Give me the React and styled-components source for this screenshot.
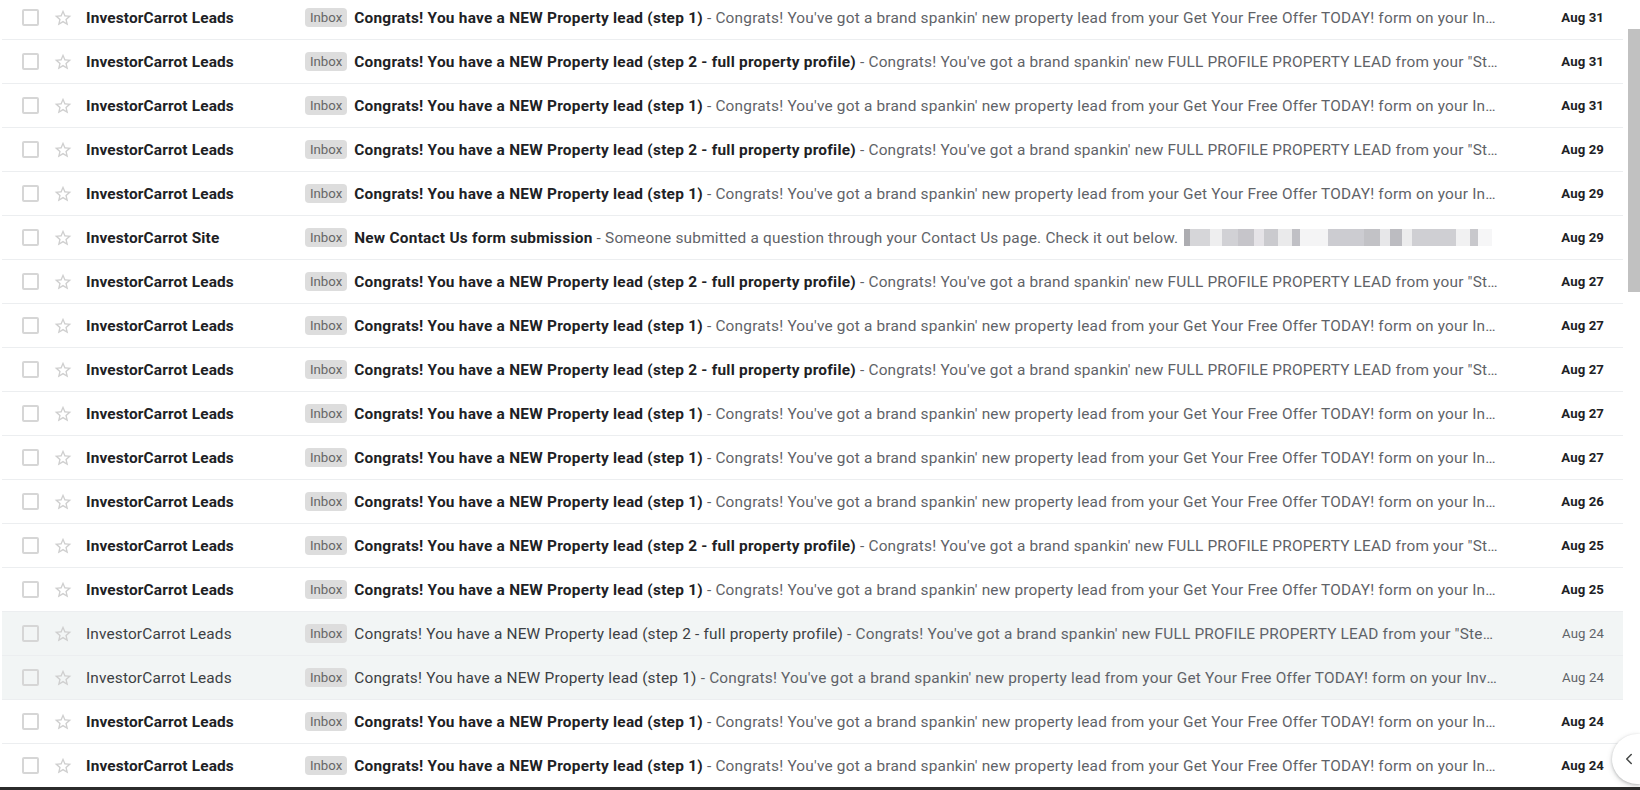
import React from "react";
import styled, { createGlobalStyle } from "styled-components";
import { ChevronLeft } from "lucide-react";

const GlobalStyle = createGlobalStyle`
  html, body {
    margin: 0;
    padding: 0;
    background: #fff;
    overflow: hidden;
  }
  body {
    font-family: Roboto, "Liberation Sans", Arial, sans-serif;
    -webkit-font-smoothing: antialiased;
  }
`;

const STEP1 = "Congrats! You have a NEW Property lead (step 1)";
const STEP2 = "Congrats! You have a NEW Property lead (step 2 - full property profile)";
const SNIP1 =
  "Congrats! You've got a brand spankin' new property lead from your Get Your Free Offer TODAY! form on your InvestorCarrot website. Here are the details";
const SNIP2 =
  "Congrats! You've got a brand spankin' new FULL PROFILE PROPERTY LEAD from your \"Step 2\" form on your InvestorCarrot website. Here are the details";

const lead = (step, date, read) => ({
  from: "InvestorCarrot Leads",
  subject: step === 1 ? STEP1 : STEP2,
  snippet: step === 1 ? SNIP1 : SNIP2,
  date,
  read,
});

const emails = [
  lead(1, "Aug 31"),
  lead(2, "Aug 31"),
  lead(1, "Aug 31"),
  lead(2, "Aug 29"),
  lead(1, "Aug 29"),
  {
    from: "InvestorCarrot Site",
    subject: "New Contact Us form submission",
    snippet: "Someone submitted a question through your Contact Us page. Check it out below.",
    date: "Aug 29",
    blurred: true,
  },
  lead(2, "Aug 27"),
  lead(1, "Aug 27"),
  lead(2, "Aug 27"),
  lead(1, "Aug 27"),
  lead(1, "Aug 27"),
  lead(1, "Aug 26"),
  lead(2, "Aug 25"),
  lead(1, "Aug 25"),
  lead(2, "Aug 24", true),
  lead(1, "Aug 24", true),
  lead(1, "Aug 24"),
  lead(1, "Aug 24"),
];

// widths / shades of the pixelated bit after "Check it out below."
const mosaic = [
  [6, "#a9a9ad"], [20, "#d4d4d8"], [12, "#eeeeef"], [16, "#cfcfd3"], [16, "#c3c2c8"],
  [10, "#e4e2e6"], [14, "#c8c8cc"], [14, "#e9e9ea"], [8, "#bdbdc2"], [28, "#f4f4f5"],
  [36, "#cacacf"], [16, "#bfbfc4"], [10, "#e6e6e8"], [12, "#b9b9be"], [10, "#ececed"],
  [44, "#cdcdd1"], [14, "#f1f1f2"], [8, "#c6c6ca"], [14, "#f6f6f7"],
];

const Page = styled.div`
  width: 1640px;
  height: 790px;
  position: relative;
  display: flex;
  flex-direction: column;
  overflow: hidden;
`;

const Main = styled.div`
  flex: 1;
  display: flex;
  min-height: 0;
  overflow: hidden;
`;

const List = styled.div`
  width: 1621px;
  margin: -4px 0 0 2px;
  flex-shrink: 0;
`;

const Row = styled.div`
  height: 43px;
  display: flex;
  align-items: center;
  padding: 0 19px 0 20px;
  border-bottom: 1px solid #eceef0;
  background: ${(p) => (p.$read ? "#f2f5f5" : "#fff")};
  color: #202124;
  font-size: 15.4px;
  letter-spacing: 0.25px;
`;

const Check = styled.span`
  width: 13px;
  height: 13px;
  border: 2px solid #d6d6d6;
  border-radius: 2px;
  flex-shrink: 0;
`;

const StarBox = styled.span`
  width: 20px;
  height: 20px;
  margin-left: 14px;
  display: flex;
  flex-shrink: 0;
`;

const Sender = styled.span`
  width: 219px;
  margin-left: 13px;
  flex-shrink: 0;
  font-weight: ${(p) => (p.$read ? 400 : 700)};
  color: ${(p) => (p.$read ? "#3c4043" : "#202124")};
  letter-spacing: 0.15px;
  white-space: nowrap;
  overflow: hidden;
`;

const Line = styled.div`
  flex: 1;
  min-width: 0;
  white-space: nowrap;
  overflow: hidden;
  text-overflow: ellipsis;
  color: #5f6368;
  letter-spacing: 0.2px;
`;

const Label = styled.span`
  display: inline-block;
  height: 19px;
  line-height: 19px;
  padding: 0 5px;
  margin-right: 7px;
  border-radius: 4px;
  background: #dddddd;
  color: #666;
  font-size: 13.2px;
  letter-spacing: 0;
  vertical-align: 1px;
`;

const Subject = styled.span`
  font-weight: ${(p) => (p.$read ? 400 : 700)};
  color: ${(p) => (p.$read ? "#3c4043" : "#202124")};
  letter-spacing: ${(p) => (p.$read ? "0.2px" : "0.25px")};
`;

const Snippet = styled.span`
  color: #5f6368;
`;

const Mosaic = styled.span`
  display: inline-flex;
  margin-left: 6px;
  height: 17px;
  vertical-align: -3px;
  opacity: 0.95;
`;

const Tile = styled.span`
  display: inline-block;
  height: 100%;
  background: ${(p) => p.$c};
`;

const DateCell = styled.span`
  width: 80px;
  margin-left: 24px;
  flex-shrink: 0;
  text-align: right;
  font-size: 13.2px;
  letter-spacing: 0.1px;
  font-weight: ${(p) => (p.$read ? 400 : 700)};
  color: ${(p) => (p.$read ? "#5f6368" : "#202124")};
`;

const Track = styled.div`
  width: 12px;
  margin-left: 5px;
  flex-shrink: 0;
`;

const Thumb = styled.div`
  margin-top: 29px;
  height: 263px;
  background: #c1c1c1;
`;

const BottomEdge = styled.div`
  height: 3px;
  background: #2b2b2b;
  flex-shrink: 0;
`;

const SideToggle = styled.button`
  position: absolute;
  right: 0;
  bottom: 6px;
  width: 28px;
  height: 50px;
  padding: 0 0 0 8px;
  border: none;
  border-radius: 25px 0 0 25px;
  background: #fff;
  box-shadow: 0 1px 3px rgba(60, 64, 67, 0.3), 0 2px 6px rgba(60, 64, 67, 0.15);
  display: flex;
  align-items: center;
  color: #444746;
`;

const StarIcon = () => (
  <svg width="20" height="20" viewBox="0 0 24 24" fill="#cfcfcf">
    <path d="M22 9.24l-7.19-.62L12 2 9.19 8.63 2 9.24l5.46 4.73L5.82 21 12 17.27 18.18 21l-1.63-7.03L22 9.24zM12 15.4l-3.76 2.27 1-4.28-3.32-2.88 4.38-.38L12 6.1l1.71 4.04 4.38.38-3.32 2.88 1 4.28L12 15.4z" />
  </svg>
);

function EmailRow({ email }) {
  const { read } = email;
  return (
    <Row $read={read}>
      <Check />
      <StarBox>
        <StarIcon />
      </StarBox>
      <Sender $read={read}>{email.from}</Sender>
      <Line>
        <Label>Inbox</Label>
        <Subject $read={read}>{email.subject}</Subject>
        <Snippet> - {email.snippet}</Snippet>
        {email.blurred && (
          <Mosaic>
            {mosaic.map(([w, c], i) => (
              <Tile key={i} $c={c} style={{ width: w }} />
            ))}
          </Mosaic>
        )}
      </Line>
      <DateCell $read={read}>{email.date}</DateCell>
    </Row>
  );
}

export default function App() {
  return (
    <>
      <GlobalStyle />
      <Page>
        <Main>
          <List>
            {emails.map((e, i) => (
              <EmailRow key={i} email={e} />
            ))}
          </List>
          <Track>
            <Thumb />
          </Track>
        </Main>
        <BottomEdge />
        <SideToggle>
          <ChevronLeft size={18} strokeWidth={2} />
        </SideToggle>
      </Page>
    </>
  );
}
